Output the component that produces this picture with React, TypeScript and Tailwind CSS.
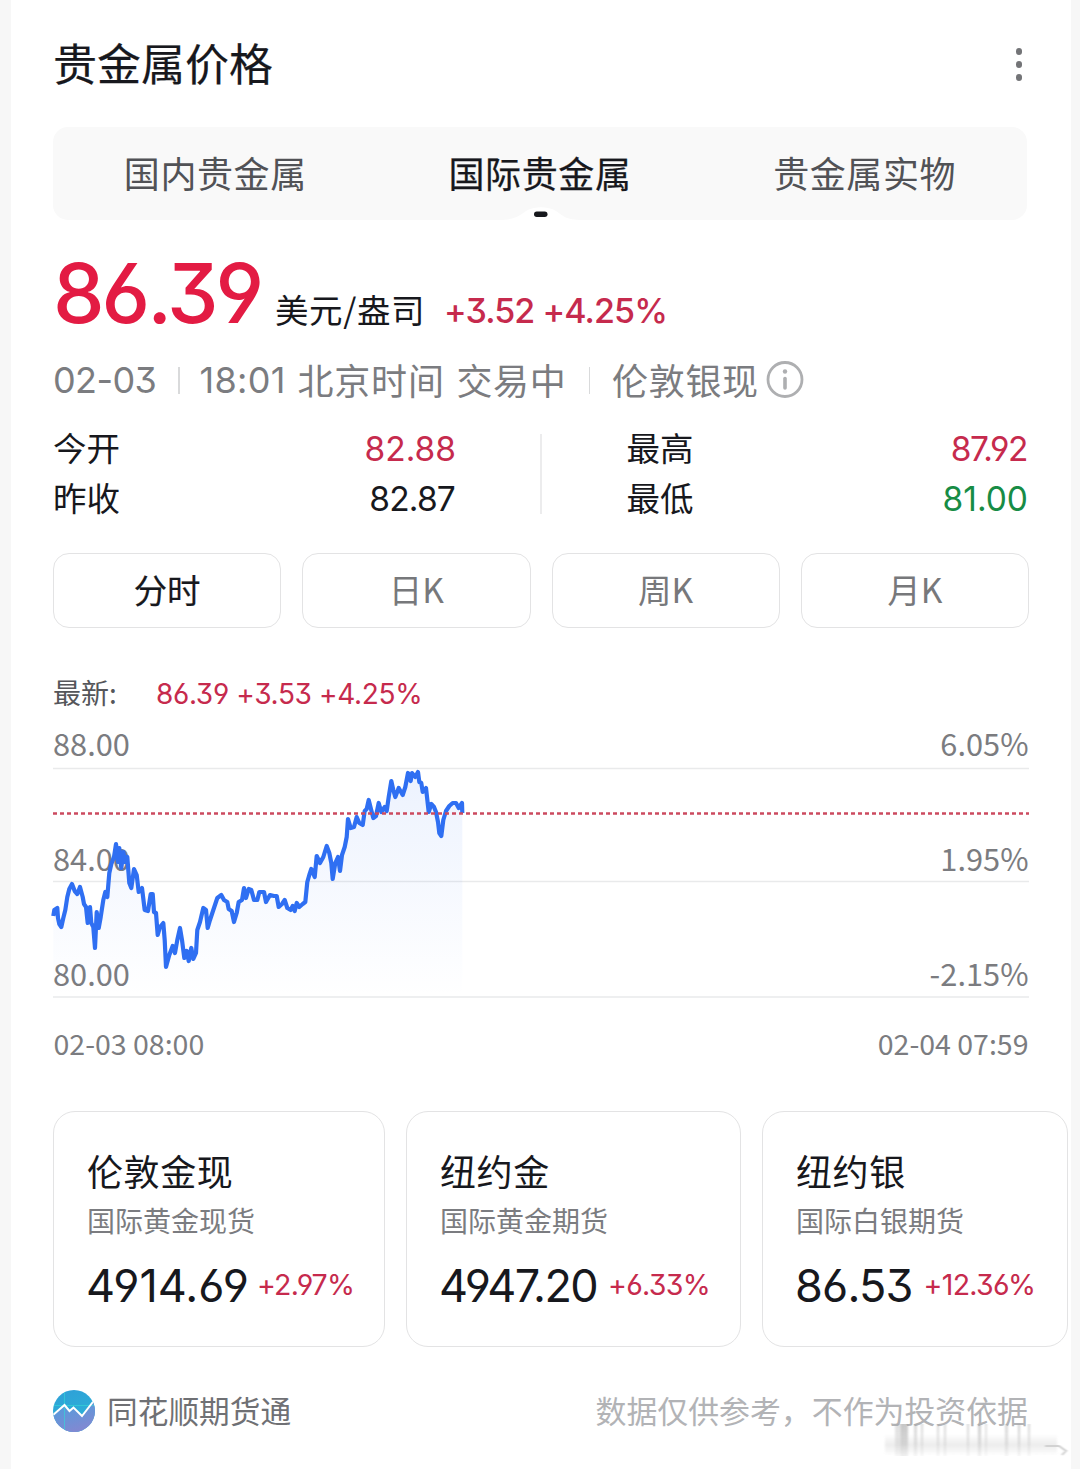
import React, { useState } from "react";

const tabs = ["国内贵金属", "国际贵金属", "贵金属实物"];
const periods = ["分时", "日K", "周K", "月K"];

const contracts = [
  {
    name: "伦敦金现",
    desc: "国际黄金现货",
    price: "4914.69",
    change: "+2.97%",
    width: "w-[332px]",
    spacing: "tracking-[0px]",
  },
  {
    name: "纽约金",
    desc: "国际黄金期货",
    price: "4947.20",
    change: "+6.33%",
    width: "w-[335px]",
    spacing: "tracking-[-1.6px] mr-[3px]",
  },
  {
    name: "纽约银",
    desc: "国际白银期货",
    price: "86.53",
    change: "+12.36%",
    width: "w-[306px]",
    spacing: "tracking-[-0.8px] mr-[3px]",
  },
];

// Horizontal grid lines with their price and percentage labels
const gridLines = [
  { y: 48.5, labelY: 35.5, price: "88.00", percent: "6.05%" },
  { y: 161.5, labelY: 151, price: "84.00", percent: "1.95%" },
  { y: 277, labelY: 266, price: "80.00", percent: "-2.15%" },
];

const points =
  "0.3,196 1.3,190 4.3,188 5,198 6.3,204 8.3,207 10.3,198 12.3,190 14.3,177 16.3,169 19,164 21.7,171 24.3,174 27,167 29.7,177 31,184 33,187 34.7,203 37,187 38.3,203 40.3,207 42,228 43.7,192 45.7,208 47.7,197 50.3,180 52.3,172 54.3,177 56.3,153 58.3,144 61,137 63,124 65,142 66.3,128 68.3,148 70.3,132 72.3,142 74.3,137 76.3,163 78.3,168 81,149 83.7,155 85.7,172 89,168 91.7,190 95,191 97.7,174 99.7,174 101,192 103,193 104.7,215 107,207 110.3,203 111.7,220 113,247 116.3,235 119.7,226 122,233 124.3,220 127,208 129,220 131.3,238 133.7,231 135.7,241 138.3,228 140.3,239 143,233 144.3,210 147,202 150.3,188 153,190 154.7,208 157,200 160.3,190 164.3,178 168.3,175 171,180 174.3,182 175.7,189 178.7,191 181,202 183.7,193 185.7,182 189,180 191,168 193,178 195.7,169 198.3,170 201,180 204.3,180 206.3,172 211,172 213,182 217,175 221,176 223.7,176 225.7,187 229,184 231.7,180 234.3,188 237.7,190 239.7,186 241.7,191 243.7,183 246.3,187 249.7,184 252.3,182 254.3,162 256.3,155 258.3,149 261.7,157 263.7,136 267,143 270.3,137 273.7,126 276.3,133 278.3,143 279.7,159 282.3,143 285,137 287,151 289,135 291.7,127 293.7,117 295,99 297.7,108 301,107 303.7,97 306.3,103 309.7,105 311.7,91 313.7,89 315.7,80 317.7,88 320.3,98 323,96 325.7,83 328.3,92 331.7,87 333.7,91 335.7,77 338.3,61 340.3,70 342.3,77 345.7,68 349.7,75 352.3,67 355,53 357.7,61 359,53 362.3,57 365,52 366.3,62 368.3,63 369.7,72 373,68 375.7,92 378.3,84 381,87 383,92 385,102 386.3,113 388.3,116 390.3,100 393,91 396.3,86 399.7,83 403,83 405.7,88 409,83 409.3,93";

// Soft vertical streaks in the bottom corner: x, width, opacity
const streaks = [
  [12, 7, 0.4],
  [18, 7, 0.7],
  [31, 3, 0.5],
  [38, 2, 0.5],
  [54, 2, 0.5],
  [61, 2, 0.5],
  [84, 2, 0.5],
  [95, 3, 0.6],
  [102, 2, 0.4],
  [122, 3, 0.5],
  [135, 2, 0.6],
  [145, 2, 0.5],
];

function Num({
  className = "",
  children,
}: {
  className?: string;
  children: React.ReactNode;
}) {
  return (
    <span
      className={`whitespace-nowrap font-['Inter','Noto_Sans_CJK_SC',sans-serif] leading-none [font-feature-settings:'cv03','cv04','cv09'] ${className}`}
    >
      {children}
    </span>
  );
}

function PriceChart() {
  return (
    <svg
      width="976"
      height="350"
      viewBox="0 0 976 350"
      className="block overflow-visible font-['Noto_Sans_CJK_SC',sans-serif]"
    >
      <defs>
        <linearGradient id="area" x1="0" y1="50" x2="0" y2="277" gradientUnits="userSpaceOnUse">
          <stop offset="0" stopColor="#2f6ff2" stopOpacity="0.09" />
          <stop offset="1" stopColor="#2f6ff2" stopOpacity="0" />
        </linearGradient>
      </defs>
      {gridLines.map((line) => (
        <g key={line.y} fill="#7b7c80" fontSize="30.8">
          <line x1="0" x2="976" y1={line.y} y2={line.y} stroke="#e9eaeb" strokeWidth="1.5" />
          <text x="0" y={line.labelY}>
            {line.price}
          </text>
          <text x="975.5" y={line.labelY} textAnchor="end">
            {line.percent}
          </text>
        </g>
      ))}
      <polygon points={`0.3,277 ${points} 409.3,277`} fill="url(#area)" />
      <polyline
        points={points}
        fill="none"
        stroke="#2f6ff2"
        strokeWidth="4.2"
        strokeLinejoin="round"
      />
      <line
        x1="0"
        x2="976"
        y1="93.5"
        y2="93.5"
        stroke="#cc4a5f"
        strokeWidth="2.6"
        strokeDasharray="4 3"
      />
      <g fill="#7b7c80" fontSize="28.5">
        <text x="0.5" y="335">
          02-03 08:00
        </text>
        <text x="975.5" y="335" textAnchor="end">
          02-04 07:59
        </text>
      </g>
    </svg>
  );
}

function Logo() {
  return (
    <svg width="42" height="42" viewBox="0 0 42 42">
      <defs>
        <linearGradient id="sky" x1="0" y1="0" x2="0.3" y2="1">
          <stop offset="0" stopColor="#2f9fd8" />
          <stop offset="1" stopColor="#2bb4d6" />
        </linearGradient>
        <linearGradient id="hill" x1="0" y1="0" x2="0.4" y2="1">
          <stop offset="0" stopColor="#4aa0de" />
          <stop offset="1" stopColor="#8089d2" />
        </linearGradient>
        <clipPath id="disc">
          <circle cx="21" cy="21" r="21" />
        </clipPath>
      </defs>
      <g clipPath="url(#disc)">
        <rect width="42" height="42" fill="url(#sky)" />
        <path d="M0 25.5L11.500 15.500L16.500 21.500L20.500 17.500L29 26.500L41 11H42V42H0Z" fill="url(#hill)" />
        <path d="M11.5 0V42M0 15.5H42" stroke="#35d8d8" strokeWidth="0.8" opacity="0.8" />
        <path
          d="M0 25L11.500 15L16.500 21L20.500 17.500L29 26L41 10.500"
          fill="none"
          stroke="#fff"
          strokeWidth="2"
        />
      </g>
    </svg>
  );
}

export default function App() {
  const [activeTab, setActiveTab] = useState(1);
  const [activePeriod, setActivePeriod] = useState(0);

  return (
    <div className="h-[1469px] w-[1080px] overflow-hidden bg-[#f7f7f7] pl-[11px] pr-[9px] font-['Noto_Sans_CJK_SC',sans-serif]">
      <div className="relative h-full bg-white pl-[42px] pr-[43px] text-[#17181d]">
        {/* Title */}
        <div className="flex h-[127px] items-center justify-between">
          <h1 className="pb-[4px] text-[44px] leading-none [-webkit-text-stroke:0.2px]">
            贵金属价格
          </h1>
          <div className="mr-[6px] mt-[2px] flex flex-col gap-[6.5px]">
            <span className="size-[6.5px] rounded-full bg-[#737477]" />
            <span className="size-[6.5px] rounded-full bg-[#737477]" />
            <span className="size-[6.5px] rounded-full bg-[#737477]" />
          </div>
        </div>

        {/* Market tabs */}
        <div className="grid h-[93px] w-[974px] grid-cols-3 rounded-[15px] bg-[#f9f9f9]">
          {tabs.map((tab, index) => (
            <button
              key={tab}
              className={`relative pb-[4px] text-[36px] leading-none tracking-[0.6px] ${
                index === activeTab ? "[-webkit-text-stroke:0.25px]" : "text-[#515256]"
              }`}
              onClick={() => setActiveTab(index)}
            >
              {tab}
              {index === activeTab && (
                <svg
                  className="absolute bottom-0 left-1/2 -translate-x-1/2"
                  width="82"
                  height="18"
                  viewBox="0 0 82 18"
                >
                  <path d="M0 18C15 18 20 14 27 9C35 4 49 4 57 9C64 14 68 18 82 18Z" fill="#fff" />
                  <rect x="35" y="9.500" width="13.500" height="5.500" rx="2.750" fill="#17181d" />
                </svg>
              )}
            </button>
          ))}
        </div>

        {/* Current quote */}
        <div className="flex h-[128px] items-baseline pt-[33px]">
          <Num className="w-[222px] text-[82px] font-medium tracking-[-3px] text-[#e31b43]">
            86.39
          </Num>
          <span className="w-[169px] whitespace-nowrap text-[33.5px] leading-none tracking-[0.6px]">
            美元/盎司
          </span>
          <Num className="text-[34px] font-medium tracking-[-0.9px] text-[#c62a4d]">
            +3.52 +4.25%
          </Num>
        </div>

        <div className="flex h-[64px] items-center whitespace-nowrap text-[#7b7c80]">
          <Num className="w-[125px] text-[36px] tracking-[-0.6px]">02-03</Num>
          <span className="h-[27px] w-[1.5px] bg-[#d9dadb]" />
          <Num className="ml-[20px] w-[98px] text-[36px] tracking-[0.3px]">18:01</Num>
          <span className="w-[159px] pb-[3px] text-[36px] leading-none tracking-[0.8px]">
            北京时间
          </span>
          <span className="w-[132px] pb-[3px] text-[36px] leading-none tracking-[0.6px]">
            交易中
          </span>
          <span className="h-[27px] w-[1.5px] bg-[#d9dadb]" />
          <span className="ml-[22px] pb-[3px] text-[36px] leading-none tracking-[0.7px]">
            伦敦银现
          </span>
          <svg className="ml-[7px]" width="38" height="38" viewBox="0 0 38 38">
            <circle cx="19" cy="18.500" r="17" fill="none" stroke="#aeafb1" strokeWidth="2.800" />
            <circle cx="19" cy="10.500" r="2.200" fill="#aeafb1" />
            <path d="M19 17.500V27" stroke="#aeafb1" strokeWidth="3.600" strokeLinecap="round" />
          </svg>
        </div>

        {/* Open / close / high / low */}
        <div className="flex h-[129px] pt-[12px] text-[33.5px] leading-none">
          <div className="w-[403px]">
            <div className="flex h-[50px] items-center justify-between">
              <span className="pb-[4px]">今开</span>
              <Num className="pt-px text-[#c62a4d]">82.88</Num>
            </div>
            <div className="flex h-[50px] items-center justify-between">
              <span className="pb-[4px]">昨收</span>
              <Num className="mr-px pt-px tracking-[-0.8px]">82.87</Num>
            </div>
          </div>
          <div className="ml-[84px] mt-[10px] h-[80px] w-[1.5px] bg-[#ececed]" />
          <div className="ml-[85px] flex-1">
            <div className="flex h-[50px] items-center justify-between">
              <span className="pb-[4px]">最高</span>
              <Num className="mr-px pt-px tracking-[-1.4px] text-[#c62a4d]">87.92</Num>
            </div>
            <div className="flex h-[50px] items-center justify-between">
              <span className="pb-[4px]">最低</span>
              <Num className="pt-px text-[#178c45]">81.00</Num>
            </div>
          </div>
        </div>

        {/* Period switch */}
        <div className="mt-3 grid w-[976px] grid-cols-4 gap-[21px]">
          {periods.map((period, index) => (
            <button
              key={period}
              className={`h-[75px] rounded-[16px] border border-[#e3e3e4] pb-[4px] text-[33.5px] leading-none ${
                index === activePeriod ? "[-webkit-text-stroke:0.2px]" : "text-[#77787b]"
              }`}
              onClick={() => setActivePeriod(index)}
            >
              {period}
            </button>
          ))}
        </div>

        <div className="flex h-[92px] items-center pt-[38px]">
          <span className="w-[103px] pb-[2px] text-[28px] leading-none text-[#55565a]">最新:</span>
          <Num className="pt-px text-[28px] tracking-[-0.35px] text-[#c62a4d]">
            86.39 +3.53 +4.25%
          </Num>
        </div>

        <PriceChart />

        {/* Related contracts */}
        <div className="mr-[-43px] mt-[41px] flex gap-[21px]">
          {contracts.map((item) => (
            <div
              key={item.name}
              className={`h-[236px] shrink-0 rounded-[22px] border border-[#e3e3e4] pl-[33px] pt-[37px] ${item.width}`}
            >
              <div className="text-[36px] leading-[42px] tracking-[0.6px]">{item.name}</div>
              <div className="mt-[11px] text-[28px] leading-[36px] text-[#7b7c80]">{item.desc}</div>
              <div className="ml-[-1px] mt-[25px] flex items-center gap-[8px]">
                <Num className={`text-[45px] ${item.spacing}`}>{item.price}</Num>
                <Num className="text-[28.5px] tracking-[-0.7px] text-[#c62a4d]">{item.change}</Num>
              </div>
            </div>
          ))}
        </div>

        {/* Footer */}
        <div className="mt-[43px] flex h-[42px] items-center leading-none">
          <Logo />
          <span className="ml-[12px] pb-[2px] text-[30.7px] text-[#6f7074]">同花顺期货通</span>
          <span className="ml-auto pb-[2px] text-[30.9px] text-[#b2b3b6]">
            数据仅供参考，不作为投资依据
          </span>
        </div>

        <svg
          className="absolute bottom-[7px] right-[2px]"
          width="186"
          height="40"
          viewBox="0 0 186 40"
        >
          <defs>
            <linearGradient id="fade" x1="0" y1="0" x2="0" y2="1">
              <stop offset="0" stopColor="#a5a5a5" stopOpacity="0.9" />
              <stop offset="0.6" stopColor="#bbbbbb" stopOpacity="0.8" />
              <stop offset="1" stopColor="#d5d5d5" stopOpacity="0.5" />
            </linearGradient>
            <linearGradient id="haze" x1="0" y1="0" x2="0" y2="1">
              <stop offset="0" stopColor="#ccc" stopOpacity="0" />
              <stop offset="0.5" stopColor="#ccc" stopOpacity="0.35" />
              <stop offset="1" stopColor="#ccc" stopOpacity="0" />
            </linearGradient>
            <filter id="soft">
              <feGaussianBlur stdDeviation="1.2 0.6" />
            </filter>
          </defs>
          <g filter="url(#soft)">
            <rect x="2" y="12" width="172" height="22" fill="url(#haze)" />
            {streaks.map(([x, width, opacity]) => (
              <rect key={x} x={x} y="2" width={width} height="32" fill="url(#fade)" opacity={opacity} />
            ))}
            <path d="M162 24H176L183 29L179 33" fill="none" stroke="#d2d2d2" strokeWidth="2" />
          </g>
        </svg>
      </div>
    </div>
  );
}
